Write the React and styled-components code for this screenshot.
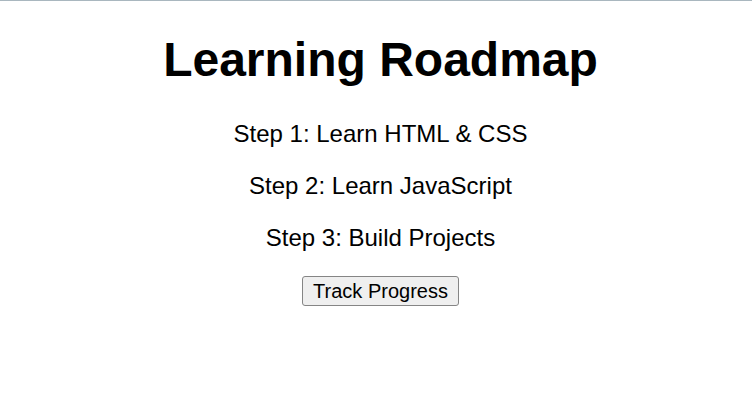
import React from "react";
import styled, { createGlobalStyle } from "styled-components";

const GlobalStyle = createGlobalStyle`
  html, body {
    margin: 0;
    padding: 0;
    background: #ffffff;
  }
  body {
    font-family: "Liberation Sans", Arial, sans-serif;
    color: #000000;
  }
`;

const Page = styled.main`
  box-sizing: border-box;
  min-height: 408px;
  border-top: 1px solid #a9b7bf;
  padding-left: 9px;
  display: flex;
  flex-direction: column;
  align-items: center;
  text-align: center;
`;

const Title = styled.h1`
  margin: 31px 0 33px;
  font-size: 48px;
  line-height: 55px;
  font-weight: 700;
`;

const Steps = styled.div`
  display: flex;
  flex-direction: column;
  align-items: center;
  gap: 24px;
`;

const Step = styled.p`
  margin: 0;
  font-size: 24px;
  line-height: 28px;
`;

const TrackButton = styled.button`
  margin-top: 24px;
  font-family: "Liberation Sans", Arial, sans-serif;
  font-size: 20px;
  line-height: 22px;
  padding: 3px 10px;
  color: #000000;
  background: #efefef;
  border: 1px solid #858585;
  border-radius: 3px;
  cursor: pointer;
`;

const steps = [
  "Step 1: Learn HTML & CSS",
  "Step 2: Learn JavaScript",
  "Step 3: Build Projects",
];

export default function App() {
  return (
    <>
      <GlobalStyle />
      <Page>
        <Title>Learning Roadmap</Title>
        <Steps>
          {steps.map((s) => (
            <Step key={s}>{s}</Step>
          ))}
        </Steps>
        <TrackButton type="button">Track Progress</TrackButton>
      </Page>
    </>
  );
}
